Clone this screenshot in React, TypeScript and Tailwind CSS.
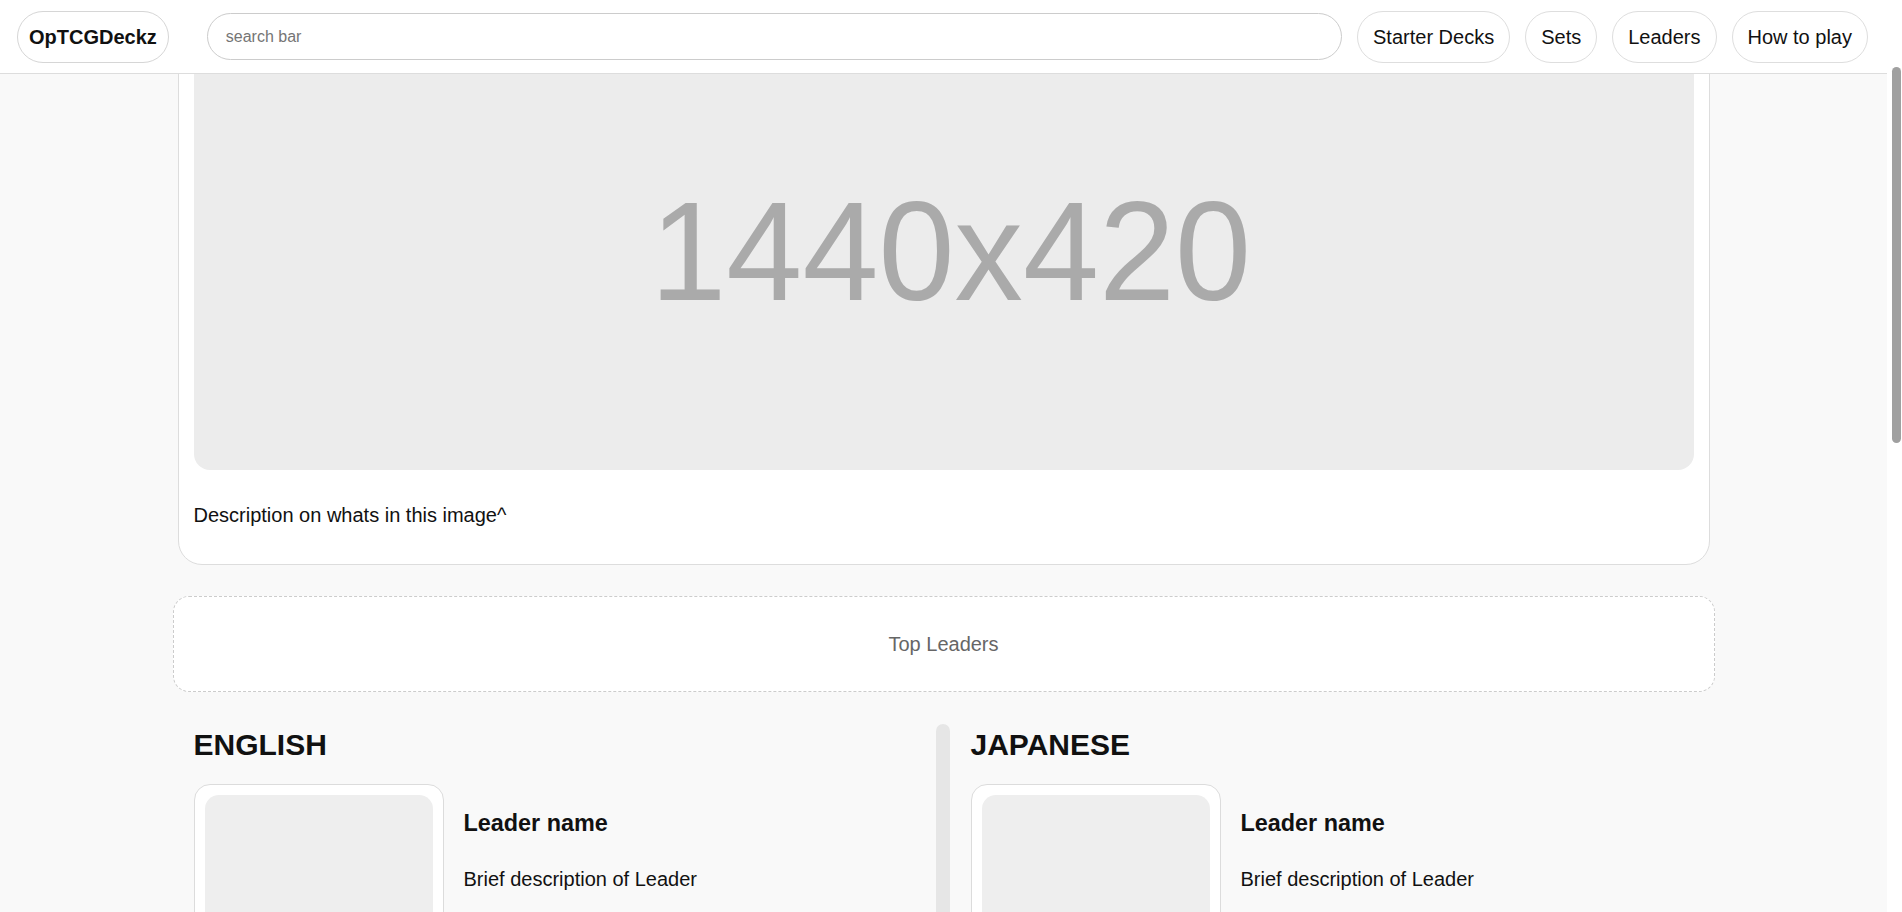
import React, { useLayoutEffect } from "react";

function LeaderRow() {
  return (
    <div className="flex mt-[22px]">
      <div className="w-[250px] shrink-0 border border-[#dcdcdc] rounded-2xl bg-white p-[10px]">
        <div className="h-[318px] bg-[#eeeeee] rounded-[14px]" />
      </div>
      <div className="ml-[20px] pt-[26px]">
        <h3 className="text-[23.4px] font-bold leading-[27px] text-[#111]">Leader name</h3>
        <p className="mt-[31px] text-[20px] leading-[23px] text-[#111]">Brief description of Leader</p>
      </div>
    </div>
  );
}

function Column({ title }: { title: string }) {
  return (
    <div className="pt-[4px]">
      <h2 className="text-[30px] font-bold leading-[34px] text-[#111]">{title}</h2>
      <LeaderRow />
      <LeaderRow />
      <LeaderRow />
    </div>
  );
}

export default function App() {
  useLayoutEffect(() => {
    window.scrollTo(0, 162);
  }, []);

  const pill =
    "h-[52px] flex items-center rounded-full border border-[#dedede] bg-white px-[15px] text-[20px] text-[#111] whitespace-nowrap";

  return (
    <div className="font-['Liberation_Sans',Arial,sans-serif] bg-[#f9f9f9] min-h-[2212px] text-[#111]">
      <header className="fixed top-0 left-0 right-[15px] z-10 h-[74px] bg-white border-b border-[#dddddd] flex items-center pl-[17px] pr-[19px]">
        <div className="h-[52px] flex items-center rounded-full border border-[#d6d6d6] px-[11px] text-[20px] font-bold text-[#111]">
          OpTCGDeckz
        </div>
        <input
          className="ml-[38px] flex-1 h-[47px] rounded-full border border-[#cccccc] bg-white pl-[18px] text-[16px] outline-none placeholder:text-[#757575]"
          placeholder="search bar"
        />
        <nav className="ml-[15px] flex items-center gap-[15px]">
          <a className={pill}>Starter Decks</a>
          <a className={pill}>Sets</a>
          <a className={pill}>Leaders</a>
          <a className={pill}>How to play</a>
        </nav>
      </header>

      <div className="fixed top-0 right-0 bottom-0 z-20 w-[15px] bg-white">
        <div className="absolute left-[5px] top-[67px] h-[376px] w-[9px] rounded-full bg-[#a0a0a0]" />
      </div>

      <main className="pt-[178px] pb-[40px] mr-[15px]">
        <div className="w-[1542px] mx-auto">
          <section className="mx-[5px] border border-[#dddddd] rounded-3xl bg-white p-[15px] pb-[37px]">
            <div className="h-[438px] bg-[#ececec] rounded-2xl flex items-center justify-center overflow-hidden">
              <span className="ml-[14px] text-[141px] leading-none text-[#aaaaaa] scale-x-[0.97] inline-block">1440x420</span>
            </div>
            <p className="mt-[34px] text-[20px] leading-[23px] text-[#111]">Description on whats in this image^</p>
          </section>

          <div className="mt-[31px] h-[96px] border border-dashed border-[#cccccc] rounded-2xl bg-white flex items-center justify-center text-[20px] text-[#666666]">
            Top Leaders
          </div>

          <div className="mt-[32px] flex px-[21px]">
            <div className="w-[742px] shrink-0">
              <Column title="ENGLISH" />
            </div>
            <div className="w-[14px] shrink-0 bg-[#e6e6e6] rounded-t-lg" />
            <div className="ml-[21px] flex-1">
              <Column title="JAPANESE" />
            </div>
          </div>
        </div>
      </main>
    </div>
  );
}
